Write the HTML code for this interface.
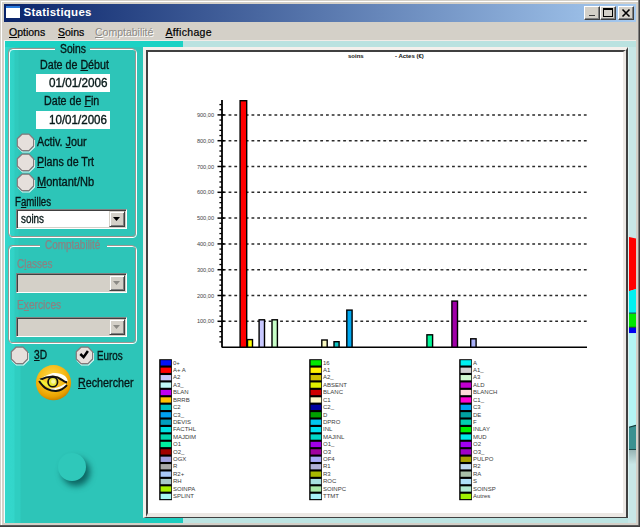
<!DOCTYPE html>
<html><head><meta charset="utf-8">
<style>
*{margin:0;padding:0;box-sizing:border-box}
html,body{width:640px;height:527px;overflow:hidden;background:#D4D0C8;font-family:"Liberation Sans",sans-serif}
.a{position:absolute}
.t{position:absolute;white-space:nowrap;line-height:1;transform-origin:0 0}
.u{text-decoration:underline;text-underline-offset:1px}
.lp{font-size:12px;color:#061818;-webkit-text-stroke:0.35px #061818}
.dis{color:#8C8282;-webkit-text-stroke:0.25px #8C8282}
.btn{background:#D4D0C8;border-top:1px solid #fff;border-left:1px solid #fff;border-right:1px solid #404040;border-bottom:1px solid #404040;box-shadow:inset -1px -1px 0 #808080}
.edit{background:#fff}
.combo{border-top:1px solid #808080;border-left:1px solid #808080;border-right:1px solid #fff;border-bottom:1px solid #fff;box-shadow:inset 1px 1px 0 #404040,inset -1px -1px 0 #D4D0C8}
.cbtn{background:#D4D0C8;border-top:1px solid #D4D0C8;border-left:1px solid #D4D0C8;border-right:1px solid #404040;border-bottom:1px solid #404040;box-shadow:inset 1px 1px 0 #fff,inset -1px -1px 0 #808080}
.radio{width:17px;height:17px;border-radius:50%;background:#E8E6E2;border:1px solid #A09890;box-shadow:inset 1px 1px 0 #C8C4C0}
</style></head><body>
<div class="a" style="left:0;top:0;width:640px;height:527px;background:#D4D0C8"></div>
<div class="a" style="left:1px;top:1px;width:637px;height:1px;background:#fff"></div>
<div class="a" style="left:1px;top:1px;width:1px;height:524px;background:#fff"></div>
<div class="a" style="left:638px;top:0;width:1px;height:526px;background:#808080"></div>
<div class="a" style="left:639px;top:0;width:1px;height:527px;background:#404040"></div>
<div class="a" style="left:0;top:525px;width:639px;height:1px;background:#585858"></div>
<div class="a" style="left:0;top:526px;width:640px;height:1px;background:#404040"></div>

<!-- title bar -->
<div class="a" style="left:4px;top:4px;width:632px;height:18px;background:linear-gradient(to right,#0A246A,#A6CAF0)"></div>
<div class="a" style="left:6px;top:6px;width:14px;height:12px;background:#fff;border-top:2px solid #2A7ADC"></div>
<div class="t" style="left:23.5px;top:7.3px;font-size:11.5px;font-weight:bold;color:#fff;letter-spacing:0.25px">Statistiques</div>

<!-- menu -->
<div class="t" style="left:9px;top:26.6px;font-size:10.5px;color:#000;-webkit-text-stroke:0.2px #000"><span class="u">O</span>ptions</div>
<div class="t" style="left:58px;top:26.6px;font-size:10.5px;color:#000;-webkit-text-stroke:0.2px #000"><span class="u">S</span>oins</div>
<div class="t" style="left:95px;top:26.6px;font-size:10.5px;color:#8C8A85;text-shadow:1px 1px 0 #fff"><span class="u">C</span>omptabilité</div>
<div class="t" style="left:165.5px;top:26.6px;font-size:10.5px;color:#000;-webkit-text-stroke:0.2px #000;letter-spacing:0.3px"><span class="u">A</span>ffichage</div>
<div class="a" style="left:4px;top:40px;width:632px;height:1px;background:#F2ECE8"></div>

<!-- client -->
<div class="a" style="left:4px;top:41px;width:179px;height:482px;background:linear-gradient(to right,#F0FFFF 0,#F0FFFF 1px,#34D8CC 1px,#31D2C6 10px,#2FCABD 11px,#2FCABD 14px,#2DC5B8 15px,#2DC5B8 100%)"></div>
<div class="a" style="left:183px;top:41px;width:453px;height:482px;background:#C8E6E6"></div>
<div class="a" style="left:183px;top:41px;width:453px;height:6px;background:#BAE2E0"></div>
<div class="a" style="left:183px;top:518px;width:445px;height:5px;background:#BCE4E2"></div>
<div class="a" style="left:5px;top:344px;width:20px;height:179px;background:linear-gradient(to right,#34D8CC 0,#33D6CA 9px,#2FCEC1 10px,#2FCEC1 15px,#2DC5B8 16px,#2DC5B8 100%)"></div>
<div class="a" style="left:5px;top:41px;width:178px;height:6px;background:#1CD2C4"></div>
<div class="a" style="left:143px;top:518px;width:40px;height:5px;background:#1CCDBF"></div>

<!-- chart frame -->
<div class="a" style="left:143px;top:47px;width:485px;height:471px;border-top:3px solid #F4F0EC;border-left:3px solid #F4F0EC;border-right:2px solid #404040;border-bottom:1px solid #404040;background:#fff"></div>
<div class="a" style="left:146px;top:50px;width:480px;height:467px;border-top:2px solid #404040;border-left:2px solid #404040;border-right:3px solid #ECE8E4;border-bottom:4px solid #ECE8E4;background:#fff"></div>


<!-- title buttons -->
<div class="a btn" style="left:584px;top:6px;width:16px;height:14px"></div>
<div class="a" style="left:588.5px;top:14.8px;width:6px;height:1.6px;background:#3A3A3A"></div>
<div class="a btn" style="left:600px;top:6px;width:16px;height:14px"></div>
<div class="a" style="left:603px;top:8px;width:9.5px;height:9px;border:1.5px solid #000;border-top-width:2px"></div>
<div class="a btn" style="left:618px;top:6px;width:16px;height:14px"></div>
<svg class="a" style="left:618px;top:6px" width="16" height="14"><path d="M4.5 3.5 L11.5 10.5 M11.5 3.5 L4.5 10.5" stroke="#000" stroke-width="1.6"/></svg>

<!-- Soins group -->
<div class="a" style="left:9px;top:49px;width:128px;height:189px;border:1px solid #fff;border-radius:4px"></div>
<div class="a" style="left:8px;top:48px;width:128px;height:189px;border:1px solid #9C9690;border-radius:4px"></div>
<div class="a" style="left:55px;top:46px;width:35px;height:5px;background:linear-gradient(#26CDC0,#2DC5B8)"></div>
<div class="t lp" style="left:60px;top:42.5px;transform:scaleX(.86)">Soins</div>
<div class="t lp" style="left:39.5px;top:59.3px;transform:scaleX(.89)">Date de <span class="u">D</span>ébut</div>
<div class="a edit" style="left:36px;top:74px;width:74px;height:18px"></div>
<div class="t lp" style="left:48.5px;top:76.8px;transform:scaleX(.975)">01/01/2006</div>
<div class="t lp" style="left:44px;top:95.4px;transform:scaleX(.89)">Date de <span class="u">F</span>in</div>
<div class="a edit" style="left:36px;top:111px;width:74px;height:18px"></div>
<div class="t lp" style="left:49px;top:114px;transform:scaleX(.965)">10/01/2006</div>

<svg class="a" style="left:15.6px;top:132.5px" width="20" height="20" viewBox="0 0 20 20"><polyline points="18.5,7 18.5,14 13.5,19 6.5,19 1.8,14.3" fill="none" stroke="#E8F8F6" stroke-width="1.1"/><polygon points="6,1.2 13,1.2 17.6,5.8 17.6,13 13,17.6 6,17.6 1.3,13 1.3,5.8" fill="#E6E0DC" stroke="#84787A" stroke-width="1.2" stroke-linejoin="round"/></svg>
<div class="t lp" style="left:37px;top:136px;transform:scaleX(.9)">Activ. <span class="u">J</span>our</div>
<svg class="a" style="left:15.6px;top:152.5px" width="20" height="20" viewBox="0 0 20 20"><polyline points="18.5,7 18.5,14 13.5,19 6.5,19 1.8,14.3" fill="none" stroke="#E8F8F6" stroke-width="1.1"/><polygon points="6,1.2 13,1.2 17.6,5.8 17.6,13 13,17.6 6,17.6 1.3,13 1.3,5.8" fill="#E6E0DC" stroke="#84787A" stroke-width="1.2" stroke-linejoin="round"/></svg>
<div class="t lp" style="left:37px;top:155.8px;transform:scaleX(.89)"><span class="u">P</span>lans de Trt</div>
<svg class="a" style="left:15.6px;top:172.5px" width="20" height="20" viewBox="0 0 20 20"><polyline points="18.5,7 18.5,14 13.5,19 6.5,19 1.8,14.3" fill="none" stroke="#E8F8F6" stroke-width="1.1"/><polygon points="6,1.2 13,1.2 17.6,5.8 17.6,13 13,17.6 6,17.6 1.3,13 1.3,5.8" fill="#E6E0DC" stroke="#84787A" stroke-width="1.2" stroke-linejoin="round"/></svg>
<div class="t lp" style="left:37px;top:175.6px;transform:scaleX(.92)"><span class="u">M</span>ontant/Nb</div>
<div class="t lp" style="left:14.5px;top:195.8px;transform:scaleX(.805)">F<span class="u">a</span>milles</div>
<div class="a combo" style="left:16px;top:209px;width:111px;height:20px;background:#fff"></div>
<div class="a cbtn" style="left:109px;top:211px;width:16px;height:16px"></div>
<svg class="a" style="left:109px;top:211px" width="16" height="16"><path d="M4 6 L11 6 L7.5 10 Z" fill="#000"/></svg>
<div class="t lp" style="left:21px;top:213.2px;transform:scaleX(.82)">soins</div>

<!-- Comptabilite group -->
<div class="a" style="left:9px;top:246px;width:128px;height:98px;border:1px solid #fff;border-radius:4px"></div>
<div class="a" style="left:8px;top:245px;width:128px;height:98px;border:1px solid #9C9690;border-radius:4px"></div>
<div class="a" style="left:40px;top:243px;width:67px;height:5px;background:#2DC5B8"></div>
<div class="t lp dis" style="left:45px;top:238.8px;transform:scaleX(.83)">Comptabilité</div>
<div class="t lp dis" style="left:16.5px;top:257.5px;transform:scaleX(.83)">C<span class="u">l</span>asses</div>
<div class="a combo" style="left:16px;top:273px;width:111px;height:20px;background:#D4D0C8"></div>
<div class="a cbtn" style="left:109px;top:275px;width:16px;height:16px"></div>
<svg class="a" style="left:109px;top:275px" width="16" height="16"><path d="M4 6 L11 6 L7.5 10 Z" fill="#8C8A85"/></svg>
<div class="t lp dis" style="left:16.5px;top:299.1px;transform:scaleX(.85)">E<span class="u">x</span>ercices</div>
<div class="a combo" style="left:16px;top:317px;width:111px;height:20px;background:#D4D0C8"></div>
<div class="a cbtn" style="left:109px;top:319px;width:16px;height:16px"></div>
<svg class="a" style="left:109px;top:319px" width="16" height="16"><path d="M4 6 L11 6 L7.5 10 Z" fill="#8C8A85"/></svg>

<!-- 3D / Euros -->
<svg class="a" style="left:9.5px;top:345.5px" width="20" height="20" viewBox="0 0 20 20"><polyline points="18.5,7 18.5,14 13.5,19 6.5,19 1.8,14.3" fill="none" stroke="#E8F8F6" stroke-width="1.1"/><polygon points="6,1.2 13,1.2 17.6,5.8 17.6,13 13,17.6 6,17.6 1.3,13 1.3,5.8" fill="#E6E0DC" stroke="#84787A" stroke-width="1.2" stroke-linejoin="round"/></svg>
<div class="t lp" style="left:34px;top:348.5px;transform:scaleX(.85)"><span class="u">3</span>D</div>
<svg class="a" style="left:75.3px;top:345.7px" width="20" height="20" viewBox="0 0 20 20"><polyline points="18.5,7 18.5,14 13.5,19 6.5,19 1.8,14.3" fill="none" stroke="#E8F8F6" stroke-width="1.1"/><polygon points="6,1.2 13,1.2 17.6,5.8 17.6,13 13,17.6 6,17.6 1.3,13 1.3,5.8" fill="#E6E0DC" stroke="#84787A" stroke-width="1.2" stroke-linejoin="round"/></svg>
<svg class="a" style="left:76px;top:347px" width="17" height="17"><path d="M4.3 7 L7.6 10.2 L11.9 4" stroke="#000" stroke-width="2.5" fill="none"/></svg>
<div class="t lp" style="left:97px;top:349.5px;transform:scaleX(.82)">Euros</div>

<!-- Rechercher -->
<div class="t lp" style="left:77.6px;top:376.8px;transform:scaleX(.895)"><span class="u">R</span>echercher</div>

<!-- pie sliver -->
<svg class="a" style="left:628px;top:47px" width="8" height="471">
<defs>
<linearGradient id="shg" x1="0" y1="0" x2="0" y2="1">
<stop offset="0" stop-color="#98B4B4"/><stop offset="1" stop-color="#C8E4E4"/>
</linearGradient>
</defs>
<rect x="0" y="0" width="8" height="471" fill="#C8E6E6"/>
<path d="M0 189.8 L8 191.5 L8 242 L0 244.5 Z" fill="#FF0000"/>
<path d="M0 244.5 L8 242 L8 266.2 L0 266.2 Z" fill="#00F0F0"/>
<rect x="0" y="265.6" width="8" height="1.2" fill="#104040"/>
<rect x="0" y="266.8" width="8" height="13.5" fill="#00E800"/>
<rect x="0" y="279.8" width="8" height="1" fill="#103010"/>
<rect x="0" y="280.8" width="8" height="5.4" fill="#0000F0"/>
<rect x="0" y="286.2" width="8" height="93" fill="#B4F4F4"/>
<path d="M0 380.5 L8 378.3 L8 403 L0 403 Z" fill="#3A9090"/>
<path d="M0 380.5 L8 378.3" stroke="#103838" stroke-width="1.2"/>
<rect x="0" y="402" width="8" height="1.2" fill="#1C4A4A"/>
<rect x="0" y="403" width="8" height="14" fill="url(#shg)"/>
</svg>
<div class="a" style="left:628px;top:47px;width:1px;height:471px;background:#DCF4F4"></div>

<!-- round button -->
<div class="a" style="left:57.5px;top:453.3px;width:28px;height:28px;border-radius:50%;background:#2FC8BA;box-shadow:4px 5px 6px rgba(0,70,70,.75)"></div>

<!-- eye icon -->
<svg class="a" style="left:34px;top:363px" width="40" height="40" viewBox="0 0 40 40">
<defs>
<radialGradient id="gold" cx="0.45" cy="0.35" r="0.65">
<stop offset="0" stop-color="#FFDA48"/><stop offset="0.55" stop-color="#F7BC18"/><stop offset="0.85" stop-color="#E8A000"/><stop offset="1" stop-color="#CC8400"/>
</radialGradient>
</defs>
<circle cx="19.5" cy="19.7" r="17.6" fill="url(#gold)"/>
<path d="M5 17 C8 14.5 13 11.5 18.8 10 C23 9.5 28 10.5 31 13 C32.5 14.5 33.5 16.5 33.8 18.5 L32 18.8 C30.5 17.5 29 16.3 27.6 15.5 C25 13.6 22 12.6 18.8 12.8 C14 13.2 10 14.6 6 16.8 Z" fill="#FFFFF6"/>
<path d="M5 17 C7 15.3 9.5 13.8 12.5 12.4 L13 14.2 C10 15 8 16 6 16.8 Z" fill="#F4F2B0"/>
<path d="M6 16.8 C10 14.8 14 13.6 18.8 13.5 C22.5 13.6 25.5 15 27.8 16.8 C29.5 18.2 31 19.2 33 19.4" stroke="#111" stroke-width="2.1" fill="none"/>
<path d="M15.5 26.6 C21 26.8 27 24.8 32 21.4" stroke="#FAFAF2" stroke-width="2.2" fill="none"/>
<path d="M6.6 18.2 C9 19.6 12 21.6 16.2 23.4" stroke="#F2F036" stroke-width="3.4" fill="none" stroke-linecap="round"/>
<path d="M5.1 18 C7.5 21.8 10 24.5 13.4 26.2 C16 27.5 19 28.2 22.1 28.1 C26 27.7 30 25.3 33 22.1" stroke="#111" stroke-width="2" fill="none"/>
<circle cx="18.8" cy="19" r="5.6" fill="#111"/>
<circle cx="18.8" cy="19" r="3.9" fill="#ECEA3A"/>
<circle cx="19.3" cy="18.5" r="2.2" fill="#F8F6A6"/>
</svg>

<!-- chart -->
<svg class="a" style="left:0;top:0" width="640" height="527" shape-rendering="crispEdges">
<line x1="222.85" y1="321.30" x2="587" y2="321.30" stroke="#2A2A2A" stroke-width="1.5" stroke-dasharray="2.8 2.93" shape-rendering="auto"/>
<line x1="217.5" y1="321.30" x2="224.5" y2="321.30" stroke="#000" stroke-width="1.5" shape-rendering="auto"/>
<text x="214" y="323.30" text-anchor="end" font-family="Liberation Sans" font-size="5.6" fill="#444">100,00</text>
<line x1="222.85" y1="295.50" x2="587" y2="295.50" stroke="#2A2A2A" stroke-width="1.5" stroke-dasharray="2.8 2.93" shape-rendering="auto"/>
<line x1="217.5" y1="295.50" x2="224.5" y2="295.50" stroke="#000" stroke-width="1.5" shape-rendering="auto"/>
<text x="214" y="297.50" text-anchor="end" font-family="Liberation Sans" font-size="5.6" fill="#444">200,00</text>
<line x1="222.85" y1="269.70" x2="587" y2="269.70" stroke="#2A2A2A" stroke-width="1.5" stroke-dasharray="2.8 2.93" shape-rendering="auto"/>
<line x1="217.5" y1="269.70" x2="224.5" y2="269.70" stroke="#000" stroke-width="1.5" shape-rendering="auto"/>
<text x="214" y="271.70" text-anchor="end" font-family="Liberation Sans" font-size="5.6" fill="#444">300,00</text>
<line x1="222.85" y1="243.90" x2="587" y2="243.90" stroke="#2A2A2A" stroke-width="1.5" stroke-dasharray="2.8 2.93" shape-rendering="auto"/>
<line x1="217.5" y1="243.90" x2="224.5" y2="243.90" stroke="#000" stroke-width="1.5" shape-rendering="auto"/>
<text x="214" y="245.90" text-anchor="end" font-family="Liberation Sans" font-size="5.6" fill="#444">400,00</text>
<line x1="222.85" y1="218.10" x2="587" y2="218.10" stroke="#2A2A2A" stroke-width="1.5" stroke-dasharray="2.8 2.93" shape-rendering="auto"/>
<line x1="217.5" y1="218.10" x2="224.5" y2="218.10" stroke="#000" stroke-width="1.5" shape-rendering="auto"/>
<text x="214" y="220.10" text-anchor="end" font-family="Liberation Sans" font-size="5.6" fill="#444">500,00</text>
<line x1="222.85" y1="192.30" x2="587" y2="192.30" stroke="#2A2A2A" stroke-width="1.5" stroke-dasharray="2.8 2.93" shape-rendering="auto"/>
<line x1="217.5" y1="192.30" x2="224.5" y2="192.30" stroke="#000" stroke-width="1.5" shape-rendering="auto"/>
<text x="214" y="194.30" text-anchor="end" font-family="Liberation Sans" font-size="5.6" fill="#444">600,00</text>
<line x1="222.85" y1="166.50" x2="587" y2="166.50" stroke="#2A2A2A" stroke-width="1.5" stroke-dasharray="2.8 2.93" shape-rendering="auto"/>
<line x1="217.5" y1="166.50" x2="224.5" y2="166.50" stroke="#000" stroke-width="1.5" shape-rendering="auto"/>
<text x="214" y="168.50" text-anchor="end" font-family="Liberation Sans" font-size="5.6" fill="#444">700,00</text>
<line x1="222.85" y1="140.70" x2="587" y2="140.70" stroke="#2A2A2A" stroke-width="1.5" stroke-dasharray="2.8 2.93" shape-rendering="auto"/>
<line x1="217.5" y1="140.70" x2="224.5" y2="140.70" stroke="#000" stroke-width="1.5" shape-rendering="auto"/>
<text x="214" y="142.70" text-anchor="end" font-family="Liberation Sans" font-size="5.6" fill="#444">800,00</text>
<line x1="222.85" y1="114.90" x2="587" y2="114.90" stroke="#2A2A2A" stroke-width="1.5" stroke-dasharray="2.8 2.93" shape-rendering="auto"/>
<line x1="217.5" y1="114.90" x2="224.5" y2="114.90" stroke="#000" stroke-width="1.5" shape-rendering="auto"/>
<text x="214" y="116.90" text-anchor="end" font-family="Liberation Sans" font-size="5.6" fill="#444">900,00</text>
<line x1="219.4" y1="341.94" x2="222" y2="341.94" stroke="#000" stroke-width="1.3" shape-rendering="auto"/>
<line x1="219.4" y1="336.78" x2="222" y2="336.78" stroke="#000" stroke-width="1.3" shape-rendering="auto"/>
<line x1="219.4" y1="331.62" x2="222" y2="331.62" stroke="#000" stroke-width="1.3" shape-rendering="auto"/>
<line x1="219.4" y1="326.46" x2="222" y2="326.46" stroke="#000" stroke-width="1.3" shape-rendering="auto"/>
<line x1="219.4" y1="316.14" x2="222" y2="316.14" stroke="#000" stroke-width="1.3" shape-rendering="auto"/>
<line x1="219.4" y1="310.98" x2="222" y2="310.98" stroke="#000" stroke-width="1.3" shape-rendering="auto"/>
<line x1="219.4" y1="305.82" x2="222" y2="305.82" stroke="#000" stroke-width="1.3" shape-rendering="auto"/>
<line x1="219.4" y1="300.66" x2="222" y2="300.66" stroke="#000" stroke-width="1.3" shape-rendering="auto"/>
<line x1="219.4" y1="290.34" x2="222" y2="290.34" stroke="#000" stroke-width="1.3" shape-rendering="auto"/>
<line x1="219.4" y1="285.18" x2="222" y2="285.18" stroke="#000" stroke-width="1.3" shape-rendering="auto"/>
<line x1="219.4" y1="280.02" x2="222" y2="280.02" stroke="#000" stroke-width="1.3" shape-rendering="auto"/>
<line x1="219.4" y1="274.86" x2="222" y2="274.86" stroke="#000" stroke-width="1.3" shape-rendering="auto"/>
<line x1="219.4" y1="264.54" x2="222" y2="264.54" stroke="#000" stroke-width="1.3" shape-rendering="auto"/>
<line x1="219.4" y1="259.38" x2="222" y2="259.38" stroke="#000" stroke-width="1.3" shape-rendering="auto"/>
<line x1="219.4" y1="254.22" x2="222" y2="254.22" stroke="#000" stroke-width="1.3" shape-rendering="auto"/>
<line x1="219.4" y1="249.06" x2="222" y2="249.06" stroke="#000" stroke-width="1.3" shape-rendering="auto"/>
<line x1="219.4" y1="238.74" x2="222" y2="238.74" stroke="#000" stroke-width="1.3" shape-rendering="auto"/>
<line x1="219.4" y1="233.58" x2="222" y2="233.58" stroke="#000" stroke-width="1.3" shape-rendering="auto"/>
<line x1="219.4" y1="228.42" x2="222" y2="228.42" stroke="#000" stroke-width="1.3" shape-rendering="auto"/>
<line x1="219.4" y1="223.26" x2="222" y2="223.26" stroke="#000" stroke-width="1.3" shape-rendering="auto"/>
<line x1="219.4" y1="212.94" x2="222" y2="212.94" stroke="#000" stroke-width="1.3" shape-rendering="auto"/>
<line x1="219.4" y1="207.78" x2="222" y2="207.78" stroke="#000" stroke-width="1.3" shape-rendering="auto"/>
<line x1="219.4" y1="202.62" x2="222" y2="202.62" stroke="#000" stroke-width="1.3" shape-rendering="auto"/>
<line x1="219.4" y1="197.46" x2="222" y2="197.46" stroke="#000" stroke-width="1.3" shape-rendering="auto"/>
<line x1="219.4" y1="187.14" x2="222" y2="187.14" stroke="#000" stroke-width="1.3" shape-rendering="auto"/>
<line x1="219.4" y1="181.98" x2="222" y2="181.98" stroke="#000" stroke-width="1.3" shape-rendering="auto"/>
<line x1="219.4" y1="176.82" x2="222" y2="176.82" stroke="#000" stroke-width="1.3" shape-rendering="auto"/>
<line x1="219.4" y1="171.66" x2="222" y2="171.66" stroke="#000" stroke-width="1.3" shape-rendering="auto"/>
<line x1="219.4" y1="161.34" x2="222" y2="161.34" stroke="#000" stroke-width="1.3" shape-rendering="auto"/>
<line x1="219.4" y1="156.18" x2="222" y2="156.18" stroke="#000" stroke-width="1.3" shape-rendering="auto"/>
<line x1="219.4" y1="151.02" x2="222" y2="151.02" stroke="#000" stroke-width="1.3" shape-rendering="auto"/>
<line x1="219.4" y1="145.86" x2="222" y2="145.86" stroke="#000" stroke-width="1.3" shape-rendering="auto"/>
<line x1="219.4" y1="135.54" x2="222" y2="135.54" stroke="#000" stroke-width="1.3" shape-rendering="auto"/>
<line x1="219.4" y1="130.38" x2="222" y2="130.38" stroke="#000" stroke-width="1.3" shape-rendering="auto"/>
<line x1="219.4" y1="125.22" x2="222" y2="125.22" stroke="#000" stroke-width="1.3" shape-rendering="auto"/>
<line x1="219.4" y1="120.06" x2="222" y2="120.06" stroke="#000" stroke-width="1.3" shape-rendering="auto"/>
<line x1="219.4" y1="109.74" x2="222" y2="109.74" stroke="#000" stroke-width="1.3" shape-rendering="auto"/>
<line x1="219.4" y1="104.58" x2="222" y2="104.58" stroke="#000" stroke-width="1.3" shape-rendering="auto"/>
<line x1="222" y1="100" x2="222" y2="347.5" stroke="#000" stroke-width="1.8" shape-rendering="auto"/>
<line x1="222" y1="347.2" x2="587" y2="347.2" stroke="#000" stroke-width="1.5" shape-rendering="auto"/>
<rect x="240.10" y="100.70" width="6.60" height="246.50" fill="#FF0000" stroke="#000" stroke-width="1.4" shape-rendering="auto"/>
<rect x="247.50" y="339.60" width="5.00" height="7.60" fill="#FFFF00" stroke="#000" stroke-width="1.4" shape-rendering="auto"/>
<rect x="259.10" y="319.80" width="5.40" height="27.40" fill="#C8C8FF" stroke="#000" stroke-width="1.4" shape-rendering="auto"/>
<rect x="272.00" y="319.80" width="5.40" height="27.40" fill="#C8FFC8" stroke="#000" stroke-width="1.4" shape-rendering="auto"/>
<rect x="321.80" y="340.00" width="5.40" height="7.20" fill="#FAFAC0" stroke="#000" stroke-width="1.4" shape-rendering="auto"/>
<rect x="334.00" y="341.70" width="5.10" height="5.50" fill="#10C4C4" stroke="#000" stroke-width="1.4" shape-rendering="auto"/>
<rect x="346.80" y="310.10" width="5.30" height="37.10" fill="#00A8F0" stroke="#000" stroke-width="1.4" shape-rendering="auto"/>
<rect x="426.90" y="334.80" width="5.70" height="12.40" fill="#00F898" stroke="#000" stroke-width="1.4" shape-rendering="auto"/>
<rect x="451.90" y="301.10" width="5.60" height="46.10" fill="#A000A8" stroke="#000" stroke-width="1.4" shape-rendering="auto"/>
<rect x="470.70" y="338.80" width="5.40" height="8.40" fill="#A8B0F8" stroke="#000" stroke-width="1.4" shape-rendering="auto"/>
<text x="348" y="58" font-family="Liberation Sans" font-size="6" font-weight="bold" fill="#111">soins</text>
<text x="395" y="58" font-family="Liberation Sans" font-size="6" font-weight="bold" fill="#111">- Actes (€)</text>
<rect x="159.2" y="359.2" width="12.7" height="141" fill="#000" shape-rendering="auto"/>
<rect x="160.60" y="360.20" width="10.6" height="5.3" fill="#0010F8" shape-rendering="auto"/>
<text x="173" y="364.60" font-family="Liberation Sans" font-size="6" fill="#3C3C3C">0+</text>
<rect x="160.60" y="367.62" width="10.6" height="5.3" fill="#FF0000" shape-rendering="auto"/>
<text x="173" y="372.02" font-family="Liberation Sans" font-size="6" fill="#3C3C3C">A+ A</text>
<rect x="160.60" y="375.04" width="10.6" height="5.3" fill="#C8C8F8" shape-rendering="auto"/>
<text x="173" y="379.44" font-family="Liberation Sans" font-size="6" fill="#3C3C3C">A2</text>
<rect x="160.60" y="382.46" width="10.6" height="5.3" fill="#C0F8F8" shape-rendering="auto"/>
<text x="173" y="386.86" font-family="Liberation Sans" font-size="6" fill="#3C3C3C">A3_</text>
<rect x="160.60" y="389.88" width="10.6" height="5.3" fill="#C000F0" shape-rendering="auto"/>
<text x="173" y="394.28" font-family="Liberation Sans" font-size="6" fill="#3C3C3C">BLAN</text>
<rect x="160.60" y="397.30" width="10.6" height="5.3" fill="#FFC000" shape-rendering="auto"/>
<text x="173" y="401.70" font-family="Liberation Sans" font-size="6" fill="#3C3C3C">BRRB</text>
<rect x="160.60" y="404.72" width="10.6" height="5.3" fill="#00C0C0" shape-rendering="auto"/>
<text x="173" y="409.12" font-family="Liberation Sans" font-size="6" fill="#3C3C3C">C2</text>
<rect x="160.60" y="412.14" width="10.6" height="5.3" fill="#00A0F0" shape-rendering="auto"/>
<text x="173" y="416.54" font-family="Liberation Sans" font-size="6" fill="#3C3C3C">C3_</text>
<rect x="160.60" y="419.56" width="10.6" height="5.3" fill="#00A0C0" shape-rendering="auto"/>
<text x="173" y="423.96" font-family="Liberation Sans" font-size="6" fill="#3C3C3C">DEVIS</text>
<rect x="160.60" y="426.98" width="10.6" height="5.3" fill="#00E0E0" shape-rendering="auto"/>
<text x="173" y="431.38" font-family="Liberation Sans" font-size="6" fill="#3C3C3C">FACTHL</text>
<rect x="160.60" y="434.40" width="10.6" height="5.3" fill="#00D8B0" shape-rendering="auto"/>
<text x="173" y="438.80" font-family="Liberation Sans" font-size="6" fill="#3C3C3C">MAJDIM</text>
<rect x="160.60" y="441.82" width="10.6" height="5.3" fill="#00F0A0" shape-rendering="auto"/>
<text x="173" y="446.22" font-family="Liberation Sans" font-size="6" fill="#3C3C3C">O1</text>
<rect x="160.60" y="449.24" width="10.6" height="5.3" fill="#A00000" shape-rendering="auto"/>
<text x="173" y="453.64" font-family="Liberation Sans" font-size="6" fill="#3C3C3C">O2_</text>
<rect x="160.60" y="456.66" width="10.6" height="5.3" fill="#A0A0E0" shape-rendering="auto"/>
<text x="173" y="461.06" font-family="Liberation Sans" font-size="6" fill="#3C3C3C">OGX</text>
<rect x="160.60" y="464.08" width="10.6" height="5.3" fill="#A8A8A8" shape-rendering="auto"/>
<text x="173" y="468.48" font-family="Liberation Sans" font-size="6" fill="#3C3C3C">R</text>
<rect x="160.60" y="471.50" width="10.6" height="5.3" fill="#A8C8F8" shape-rendering="auto"/>
<text x="173" y="475.90" font-family="Liberation Sans" font-size="6" fill="#3C3C3C">R2+</text>
<rect x="160.60" y="478.92" width="10.6" height="5.3" fill="#A8C8C8" shape-rendering="auto"/>
<text x="173" y="483.32" font-family="Liberation Sans" font-size="6" fill="#3C3C3C">RH</text>
<rect x="160.60" y="486.34" width="10.6" height="5.3" fill="#A8F000" shape-rendering="auto"/>
<text x="173" y="490.74" font-family="Liberation Sans" font-size="6" fill="#3C3C3C">SOINPA</text>
<rect x="160.60" y="493.76" width="10.6" height="5.3" fill="#A8F8F0" shape-rendering="auto"/>
<text x="173" y="498.16" font-family="Liberation Sans" font-size="6" fill="#3C3C3C">SPLINT</text>
<rect x="309.2" y="359.2" width="12.7" height="141" fill="#000" shape-rendering="auto"/>
<rect x="310.60" y="360.20" width="10.6" height="5.3" fill="#00E800" shape-rendering="auto"/>
<text x="323" y="364.60" font-family="Liberation Sans" font-size="6" fill="#3C3C3C">16</text>
<rect x="310.60" y="367.62" width="10.6" height="5.3" fill="#FFF000" shape-rendering="auto"/>
<text x="323" y="372.02" font-family="Liberation Sans" font-size="6" fill="#3C3C3C">A1</text>
<rect x="310.60" y="375.04" width="10.6" height="5.3" fill="#D0C000" shape-rendering="auto"/>
<text x="323" y="379.44" font-family="Liberation Sans" font-size="6" fill="#3C3C3C">A2_</text>
<rect x="310.60" y="382.46" width="10.6" height="5.3" fill="#E0F000" shape-rendering="auto"/>
<text x="323" y="386.86" font-family="Liberation Sans" font-size="6" fill="#3C3C3C">ABSENT</text>
<rect x="310.60" y="389.88" width="10.6" height="5.3" fill="#D00000" shape-rendering="auto"/>
<text x="323" y="394.28" font-family="Liberation Sans" font-size="6" fill="#3C3C3C">BLANC</text>
<rect x="310.60" y="397.30" width="10.6" height="5.3" fill="#FFF8C8" shape-rendering="auto"/>
<text x="323" y="401.70" font-family="Liberation Sans" font-size="6" fill="#3C3C3C">C1</text>
<rect x="310.60" y="404.72" width="10.6" height="5.3" fill="#0000A0" shape-rendering="auto"/>
<text x="323" y="409.12" font-family="Liberation Sans" font-size="6" fill="#3C3C3C">C2_</text>
<rect x="310.60" y="412.14" width="10.6" height="5.3" fill="#00A000" shape-rendering="auto"/>
<text x="323" y="416.54" font-family="Liberation Sans" font-size="6" fill="#3C3C3C">D</text>
<rect x="310.60" y="419.56" width="10.6" height="5.3" fill="#00C8F0" shape-rendering="auto"/>
<text x="323" y="423.96" font-family="Liberation Sans" font-size="6" fill="#3C3C3C">DPRO</text>
<rect x="310.60" y="426.98" width="10.6" height="5.3" fill="#00E0F0" shape-rendering="auto"/>
<text x="323" y="431.38" font-family="Liberation Sans" font-size="6" fill="#3C3C3C">INL</text>
<rect x="310.60" y="434.40" width="10.6" height="5.3" fill="#00D8C8" shape-rendering="auto"/>
<text x="323" y="438.80" font-family="Liberation Sans" font-size="6" fill="#3C3C3C">MAJINL</text>
<rect x="310.60" y="441.82" width="10.6" height="5.3" fill="#A000E8" shape-rendering="auto"/>
<text x="323" y="446.22" font-family="Liberation Sans" font-size="6" fill="#3C3C3C">O1_</text>
<rect x="310.60" y="449.24" width="10.6" height="5.3" fill="#A000A0" shape-rendering="auto"/>
<text x="323" y="453.64" font-family="Liberation Sans" font-size="6" fill="#3C3C3C">O3</text>
<rect x="310.60" y="456.66" width="10.6" height="5.3" fill="#A8A8F8" shape-rendering="auto"/>
<text x="323" y="461.06" font-family="Liberation Sans" font-size="6" fill="#3C3C3C">OF4</text>
<rect x="310.60" y="464.08" width="10.6" height="5.3" fill="#B0B0D8" shape-rendering="auto"/>
<text x="323" y="468.48" font-family="Liberation Sans" font-size="6" fill="#3C3C3C">R1</text>
<rect x="310.60" y="471.50" width="10.6" height="5.3" fill="#A8B800" shape-rendering="auto"/>
<text x="323" y="475.90" font-family="Liberation Sans" font-size="6" fill="#3C3C3C">R3</text>
<rect x="310.60" y="478.92" width="10.6" height="5.3" fill="#A8E0E0" shape-rendering="auto"/>
<text x="323" y="483.32" font-family="Liberation Sans" font-size="6" fill="#3C3C3C">ROC</text>
<rect x="310.60" y="486.34" width="10.6" height="5.3" fill="#A8E8A8" shape-rendering="auto"/>
<text x="323" y="490.74" font-family="Liberation Sans" font-size="6" fill="#3C3C3C">SOINPC</text>
<rect x="310.60" y="493.76" width="10.6" height="5.3" fill="#A8F0F8" shape-rendering="auto"/>
<text x="323" y="498.16" font-family="Liberation Sans" font-size="6" fill="#3C3C3C">TTMT</text>
<rect x="459.2" y="359.2" width="12.7" height="141" fill="#000" shape-rendering="auto"/>
<rect x="460.60" y="360.20" width="10.6" height="5.3" fill="#00F0F0" shape-rendering="auto"/>
<text x="473" y="364.60" font-family="Liberation Sans" font-size="6" fill="#3C3C3C">A</text>
<rect x="460.60" y="367.62" width="10.6" height="5.3" fill="#D0D0D0" shape-rendering="auto"/>
<text x="473" y="372.02" font-family="Liberation Sans" font-size="6" fill="#3C3C3C">A1_</text>
<rect x="460.60" y="375.04" width="10.6" height="5.3" fill="#D0F8D0" shape-rendering="auto"/>
<text x="473" y="379.44" font-family="Liberation Sans" font-size="6" fill="#3C3C3C">A3</text>
<rect x="460.60" y="382.46" width="10.6" height="5.3" fill="#C000D0" shape-rendering="auto"/>
<text x="473" y="386.86" font-family="Liberation Sans" font-size="6" fill="#3C3C3C">ALD</text>
<rect x="460.60" y="389.88" width="10.6" height="5.3" fill="#FFD8D8" shape-rendering="auto"/>
<text x="473" y="394.28" font-family="Liberation Sans" font-size="6" fill="#3C3C3C">BLANCH</text>
<rect x="460.60" y="397.30" width="10.6" height="5.3" fill="#FF00D0" shape-rendering="auto"/>
<text x="473" y="401.70" font-family="Liberation Sans" font-size="6" fill="#3C3C3C">C1_</text>
<rect x="460.60" y="404.72" width="10.6" height="5.3" fill="#00A0F0" shape-rendering="auto"/>
<text x="473" y="409.12" font-family="Liberation Sans" font-size="6" fill="#3C3C3C">C3</text>
<rect x="460.60" y="412.14" width="10.6" height="5.3" fill="#00A0A0" shape-rendering="auto"/>
<text x="473" y="416.54" font-family="Liberation Sans" font-size="6" fill="#3C3C3C">DE</text>
<rect x="460.60" y="419.56" width="10.6" height="5.3" fill="#00D0B0" shape-rendering="auto"/>
<text x="473" y="423.96" font-family="Liberation Sans" font-size="6" fill="#3C3C3C">F</text>
<rect x="460.60" y="426.98" width="10.6" height="5.3" fill="#00F000" shape-rendering="auto"/>
<text x="473" y="431.38" font-family="Liberation Sans" font-size="6" fill="#3C3C3C">INLAY</text>
<rect x="460.60" y="434.40" width="10.6" height="5.3" fill="#00E8E8" shape-rendering="auto"/>
<text x="473" y="438.80" font-family="Liberation Sans" font-size="6" fill="#3C3C3C">MUD</text>
<rect x="460.60" y="441.82" width="10.6" height="5.3" fill="#A000F0" shape-rendering="auto"/>
<text x="473" y="446.22" font-family="Liberation Sans" font-size="6" fill="#3C3C3C">O2</text>
<rect x="460.60" y="449.24" width="10.6" height="5.3" fill="#A000C8" shape-rendering="auto"/>
<text x="473" y="453.64" font-family="Liberation Sans" font-size="6" fill="#3C3C3C">O3_</text>
<rect x="460.60" y="456.66" width="10.6" height="5.3" fill="#A8A000" shape-rendering="auto"/>
<text x="473" y="461.06" font-family="Liberation Sans" font-size="6" fill="#3C3C3C">PULPO</text>
<rect x="460.60" y="464.08" width="10.6" height="5.3" fill="#C0D8F0" shape-rendering="auto"/>
<text x="473" y="468.48" font-family="Liberation Sans" font-size="6" fill="#3C3C3C">R2</text>
<rect x="460.60" y="471.50" width="10.6" height="5.3" fill="#A8C0A8" shape-rendering="auto"/>
<text x="473" y="475.90" font-family="Liberation Sans" font-size="6" fill="#3C3C3C">RA</text>
<rect x="460.60" y="478.92" width="10.6" height="5.3" fill="#B0E0F8" shape-rendering="auto"/>
<text x="473" y="483.32" font-family="Liberation Sans" font-size="6" fill="#3C3C3C">S</text>
<rect x="460.60" y="486.34" width="10.6" height="5.3" fill="#B0E8D0" shape-rendering="auto"/>
<text x="473" y="490.74" font-family="Liberation Sans" font-size="6" fill="#3C3C3C">SOINSP</text>
<rect x="460.60" y="493.76" width="10.6" height="5.3" fill="#A0F000" shape-rendering="auto"/>
<text x="473" y="498.16" font-family="Liberation Sans" font-size="6" fill="#3C3C3C">Autres</text>
</svg>
</body></html>
